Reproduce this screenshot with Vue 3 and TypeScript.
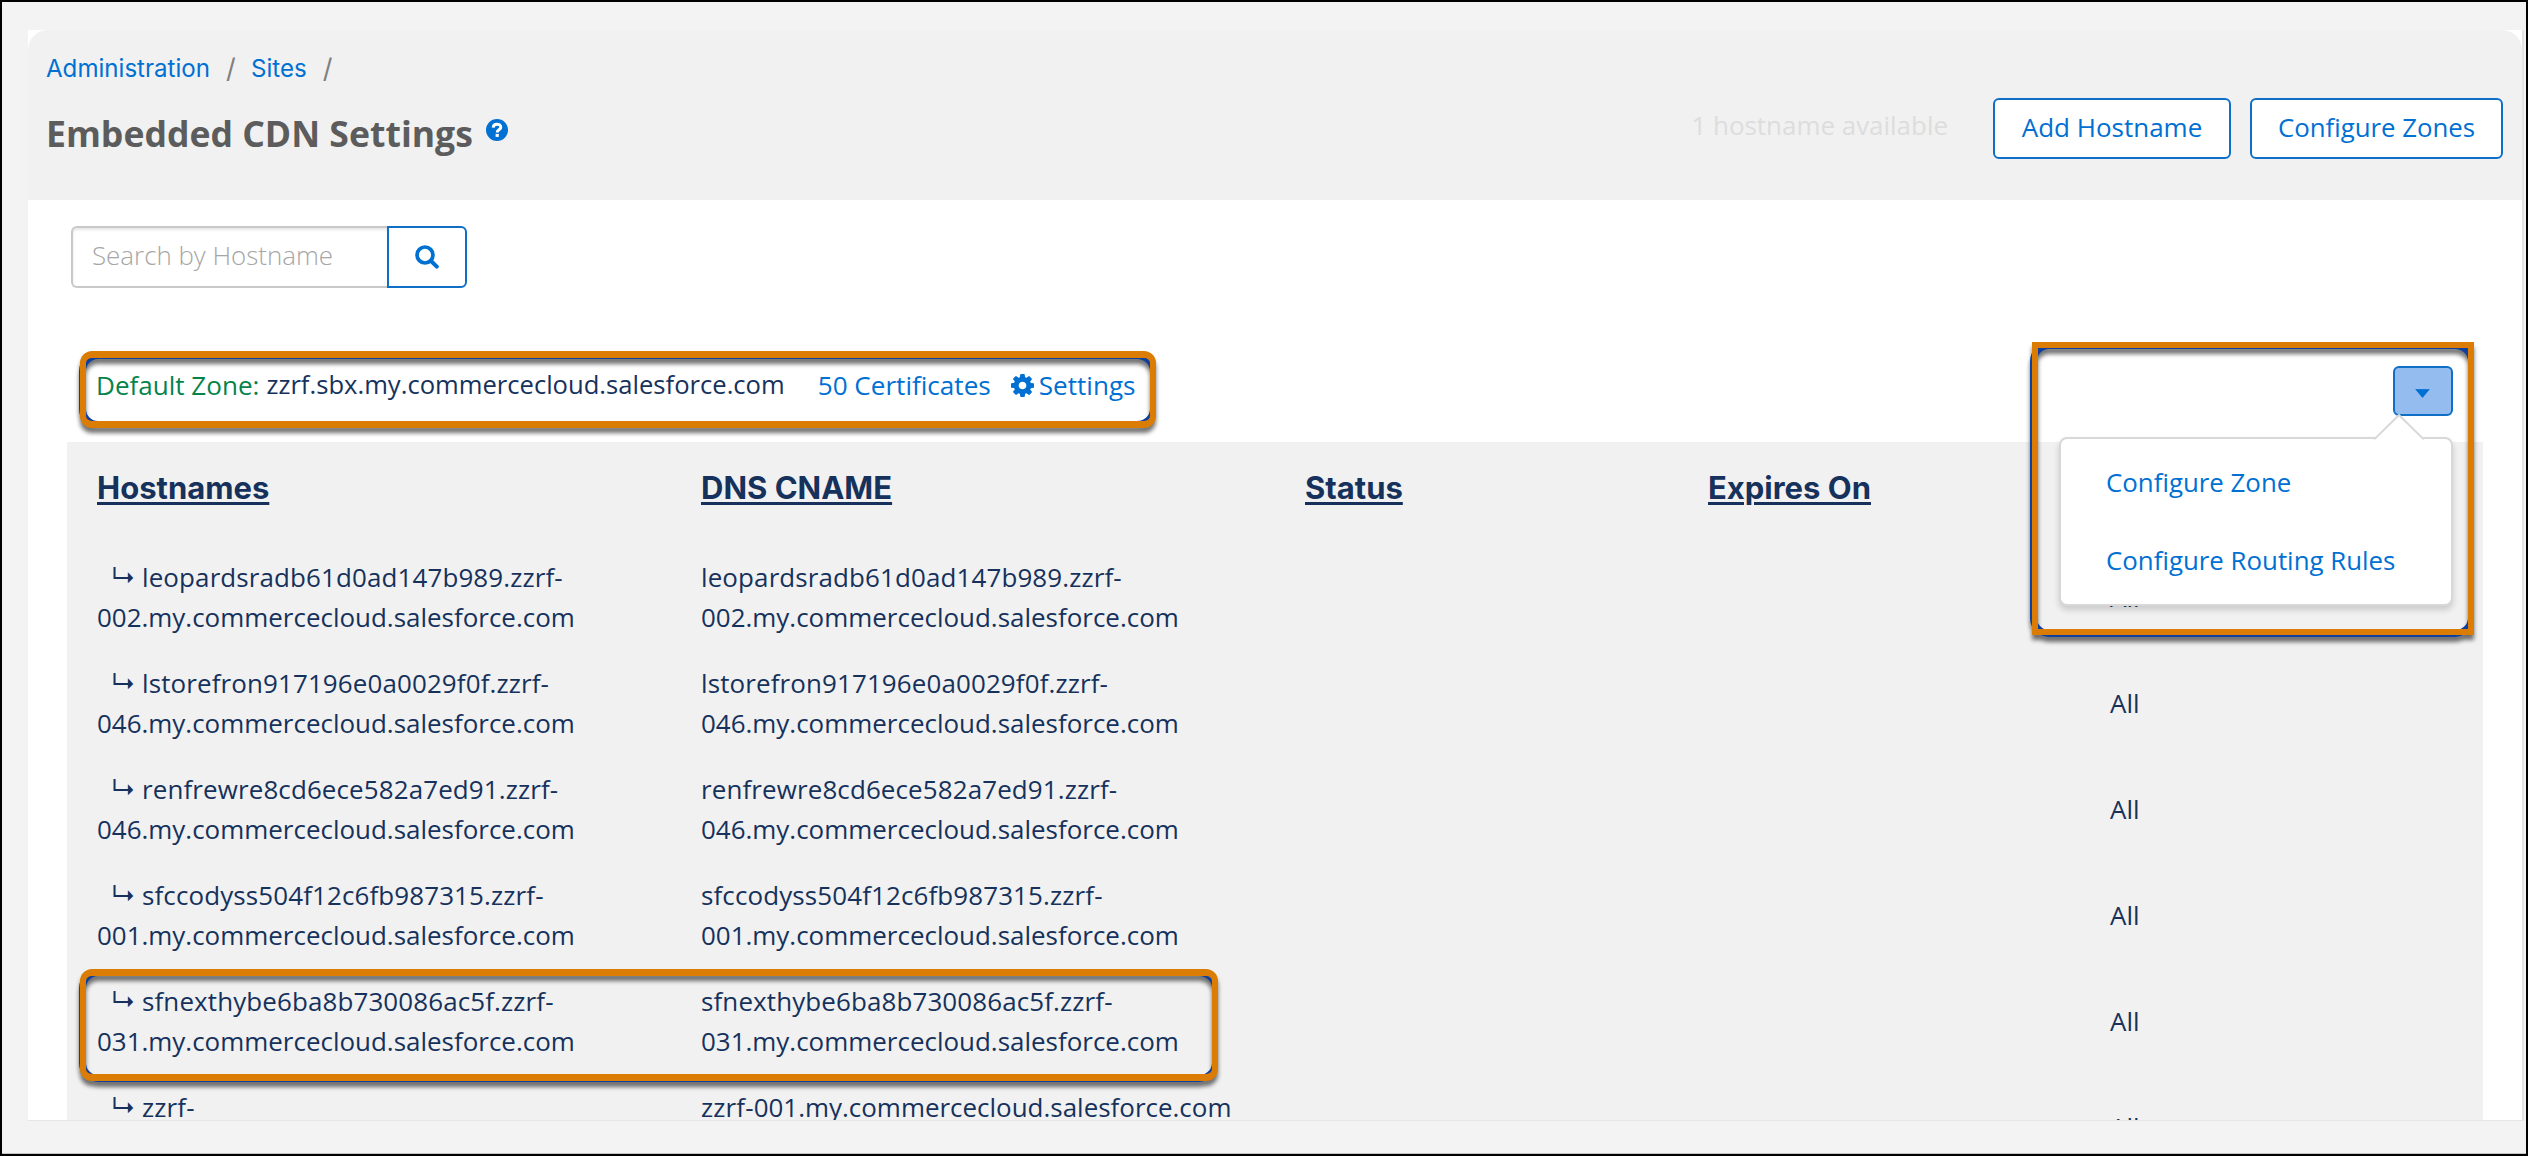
<script setup lang="ts">
interface HostRow {
  name: string
  suffix: string
  sites: string
}

const domain = '.my.commercecloud.salesforce.com'
const columns: string[] = ['Hostnames', 'DNS CNAME', 'Status', 'Expires On', '']
const hosts: HostRow[] = [
  { name: 'leopardsradb61d0ad147b989.zzrf-', suffix: '002' + domain, sites: 'All' },
  { name: 'lstorefron917196e0a0029f0f.zzrf-', suffix: '046' + domain, sites: 'All' },
  { name: 'renfrewre8cd6ece582a7ed91.zzrf-', suffix: '046' + domain, sites: 'All' },
  { name: 'sfccodyss504f12c6fb987315.zzrf-', suffix: '001' + domain, sites: 'All' },
  { name: 'sfnexthybe6ba8b730086ac5f.zzrf-', suffix: '031' + domain, sites: 'All' },
  { name: 'zzrf-', suffix: '001' + domain, sites: 'All' },
]
const menu: string[] = ['Configure Zone', 'Configure Routing Rules']
</script>

<template>
  <div class="screen">
    <main class="panel">
      <header class="head">
        <div class="head-left">
          <nav class="crumbs">
            <a>Administration</a><span class="slash">/</span><a>Sites</a><span class="slash">/</span>
          </nav>
          <div class="title-row">
            <h1>Embedded CDN Settings</h1>
            <svg class="help" viewBox="0 0 22 22" width="22" height="22">
              <circle cx="11" cy="11" r="11" fill="#0070d2" />
              <path d="M7.2 8.6C7.3 4 14.8 4.1 14.8 8.2C14.8 10.8 11.2 10.6 11.2 13.4" fill="none" stroke="#fff" stroke-width="3" />
              <rect x="9.6" y="14.9" width="3.2" height="3" fill="#fff" />
            </svg>
          </div>
        </div>
        <div class="actions">
          <span class="available">1 hostname available</span>
          <button class="btn add">Add Hostname</button>
          <button class="btn zones">Configure Zones</button>
        </div>
      </header>

      <div class="search">
        <input type="text" placeholder="Search by Hostname" />
        <button class="search-btn">
          <svg viewBox="0 0 24 24" width="24" height="24" fill="none" stroke="#0070d2" stroke-linecap="round">
            <circle cx="10" cy="10" r="8" stroke-width="3.7" />
            <path d="M16 16L21.8 21.6" stroke-width="4" />
          </svg>
        </button>
      </div>

      <div class="zone">
        <div class="zone-info">
          <span class="zone-label">Default Zone:</span>
          <span class="zone-name">zzrf.sbx.my.commercecloud.salesforce.com</span>
          <a class="certs">50 Certificates</a>
          <svg class="gear" viewBox="0 0 1536 1536" width="23" height="23">
            <path fill="#0070d2" d="M1024 768q0-106-75-181t-181-75-181 75-75 181 75 181 181 75 181-75 75-181zm512-109v222q0 12-8 23t-20 13l-185 28q-19 54-39 91 35 50 107 138 10 12 10 25t-9 23q-27 37-99 108t-94 71q-12 0-26-9l-138-108q-44 23-91 38-16 136-29 186-7 28-36 28h-222q-14 0-24.5-8.5t-11.5-21.5l-28-184q-49-16-90-37l-141 107q-10 9-25 9-14 0-25-11-126-114-165-168-7-10-7-23 0-12 8-23 15-21 51-66.5t54-70.5q-27-50-41-99l-183-27q-13-2-21-12.5t-8-23.5v-222q0-12 8-23t19-13l186-28q14-46 39-92-40-57-107-138-10-12-10-24 0-10 9-23 26-36 98.5-107.5t94.5-71.5q13 0 26 10l138 107q44-23 91-38 16-136 29-186 7-28 36-28h222q14 0 24.5 8.5t11.5 21.5l28 184q49 16 90 37l142-107q9-9 24-9 13 0 25 10 129 119 165 170 7 8 7 22 0 12-8 23-15 21-51 66.5t-54 70.5q26 50 41 98l183 28q13 2 21 12.5t8 23.5z" />
          </svg>
          <a class="settings">Settings</a>
        </div>
        <div class="dropdown">
          <button class="toggle">
            <svg viewBox="0 0 15 9" width="15" height="9"><path d="M0.8 0.4H14.2L7.5 8.4Z" fill="#0070d2" stroke="#0070d2" stroke-width="0.8" stroke-linejoin="round" /></svg>
          </button>
          <div class="menu">
            <svg class="tip" viewBox="0 0 50 26" width="50" height="26">
              <path d="M0 25L1 24.5L25 1L49 24.5L50 25V26H0Z" fill="#fff" />
              <path d="M0 24.6H1L25 1L49 24.6H50" fill="none" stroke="#d8d8d8" stroke-width="2" />
            </svg>
            <a v-for="item in menu" :key="item" class="menu-item">{{ item }}</a>
          </div>
        </div>
      </div>

      <section class="table">
        <div class="row header-row">
          <div v-for="(col, i) in columns" :key="i" class="cell"><span>{{ col }}</span></div>
        </div>
        <div v-for="host in hosts" :key="host.name" class="row">
          <div class="cell"><span class="arrow">↳</span><span class="first">{{ host.name }}</span><wbr />{{ host.suffix }}</div>
          <div class="cell"><span class="first">{{ host.name }}</span><wbr />{{ host.suffix }}</div>
          <div class="cell"></div>
          <div class="cell"></div>
          <div class="cell sites">{{ host.sites }}</div>
        </div>
      </section>
    </main>

    <div class="callout callout-zone"></div>
    <div class="callout callout-menu"></div>
    <div class="callout callout-row"></div>
  </div>
</template>

<style>
body {
  margin: 0;
}
</style>

<style scoped>
* {
  box-sizing: border-box;
}
.screen {
  position: relative;
  width: 2528px;
  height: 1156px;
  overflow: hidden;
  border: 2px solid #000;
  background: #f3f3f3;
  box-shadow: inset 0 -1px 0 #c4c4c4;
  padding: 28px 0 0 26px;
  font-family: 'Open Sans', 'Noto Sans', sans-serif;
  font-size: 26px;
  color: #16325c;
}
.panel {
  width: 2496px;
  height: 1090px;
  overflow: hidden;
  background: #fff;
  border-right: 2px solid #e4e4e4;
  box-shadow: 0 1px 0 #e6e6e6;
}
.head {
  display: flex;
  justify-content: space-between;
  align-items: flex-start;
  height: 170px;
  padding: 23px 19px 0 18px;
  background: #f1f1f1;
  border-radius: 20px 20px 0 0;
}
a {
  color: #0070d2;
}
.crumbs {
  display: flex;
  padding-top: 1px;
  font: 24.1px/30px Inter, sans-serif;
}
.slash {
  width: 10px;
  margin: 0 15px 0 16px;
  font-size: 27px;
  color: #808080;
}
.title-row {
  display: flex;
  align-items: center;
  gap: 13px;
  margin-top: 25px;
}
h1 {
  margin: 0;
  font-size: 35.6px;
  line-height: 48px;
  font-weight: 700;
  color: #5c5c5c;
}
.help {
  margin-top: -6px;
}
.actions {
  display: flex;
  align-items: center;
  height: 61px;
  margin-top: 45px;
}
.available {
  margin-right: 45px;
  padding-bottom: 7px;
  font-size: 25.95px;
  color: #dddddd;
}
.btn {
  height: 61px;
  padding: 0 0 3px 0;
  border: 2px solid #0f6fc6;
  border-radius: 6px;
  background: #fff;
  font: 26px 'Open Sans', sans-serif;
  color: #0070d2;
}
.add {
  width: 238px;
  margin-right: 19px;
}
.zones {
  width: 253px;
  font-size: 25.8px;
}
.search {
  display: flex;
  margin: 26px 0 0 43px;
}
.search input {
  width: 317px;
  height: 62px;
  padding: 0 0 4px 19px;
  border: 2px solid #c9c9c9;
  border-right: 0;
  border-radius: 6px 0 0 6px;
  box-shadow: inset 0 2px 3px rgba(0, 0, 0, 0.1);
  outline: none;
  background: #fff;
  font: 300 25.9px 'Open Sans', sans-serif;
}
.search input::placeholder {
  color: #a6a6a6;
}
.search-btn {
  display: flex;
  align-items: center;
  justify-content: center;
  width: 80px;
  height: 62px;
  margin-left: -1px;
  padding: 0;
  border: 2px solid #0f6fc6;
  border-radius: 0 6px 6px 0;
  background: #fff;
}
.zone {
  display: flex;
  justify-content: space-between;
  align-items: flex-start;
  height: 154px;
  margin: 0 39px;
  padding: 77px 30px 0 29px;
}
.zone-info {
  display: flex;
  align-items: center;
  line-height: 40px;
}
.zone-label {
  margin-right: 7px;
  font-size: 26.05px;
  color: #04844b;
}
.zone-name {
  margin-right: 33px;
  font-size: 25.6px;
}
.certs {
  margin-right: 20px;
  font-size: 26.1px;
}
.gear {
  margin-right: 5px;
}
.settings {
  font-size: 26.1px;
}
.dropdown {
  position: relative;
  margin-top: 1px;
}
.toggle {
  display: flex;
  align-items: center;
  justify-content: center;
  width: 60px;
  height: 50px;
  padding: 4px 2px 0 0;
  border: 2px solid #0f6fc6;
  border-radius: 6px;
  background: #94bcee;
}
.menu {
  position: absolute;
  z-index: 2;
  top: 71px;
  right: 0;
  width: 394px;
  height: 169px;
  padding: 4px 0 0 45px;
  border: 2px solid #d8d8d8;
  border-radius: 8px;
  background: #fff;
  box-shadow: 0 4px 6px rgba(0, 0, 0, 0.16);
}
.tip {
  position: absolute;
  top: -25px;
  left: 313px;
}
.menu-item {
  display: block;
  line-height: 78px;
  font-size: 25.85px;
}
.table {
  width: 2416px;
  margin-left: 39px;
  background: #f1f1f1;
}
.row {
  display: grid;
  grid-template-columns: 604px 604px 403px 402px 403px;
  align-items: start;
  height: 106px;
  padding-top: 13px;
  font-size: 25.96px;
  line-height: 40px;
}
.cell {
  padding: 0 28px 0 30px;
}
.sites {
  padding-top: 20px;
}
.header-row {
  height: 102px;
  padding-top: 26px;
  font: 700 31px/40px Inter, sans-serif;
}
.header-row .cell {
  text-decoration: underline;
  text-decoration-thickness: 3px;
  text-underline-offset: 3px;
}
.first {
  letter-spacing: 0.12px;
}
.arrow {
  position: relative;
  top: -1px;
  display: inline-block;
  width: 45px;
  padding-left: 14px;
  font: 25px/30px Inter, sans-serif;
}
.callout {
  position: absolute;
  z-index: 5;
  filter: drop-shadow(0 5px 2px rgba(0, 0, 0, 0.55));
}
.callout::before,
.callout::after {
  content: '';
  position: absolute;
}
.callout::before {
  inset: 1px 0 0 -1px;
  border: 7px solid #0c3f9e;
  border-right-width: 6px;
  border-radius: 19px;
}
.callout::after {
  inset: 0;
  border: 7px solid #db7c05;
  border-width: 7px 6px;
  border-radius: 12px;
}
.callout-zone {
  left: 78px;
  top: 349px;
  width: 1076px;
  height: 77px;
}
.callout-menu {
  left: 2030px;
  top: 340px;
  width: 442px;
  height: 293px;
}
.callout-menu::before {
  inset: 0 0 -2px -2px;
}
.callout-menu::after {
  border-width: 6px;
  border-radius: 0;
}
.callout-row {
  left: 78px;
  top: 967px;
  width: 1138px;
  height: 112px;
}
.callout-row::before {
  inset: 0 0 -1px -1px;
}
</style>
